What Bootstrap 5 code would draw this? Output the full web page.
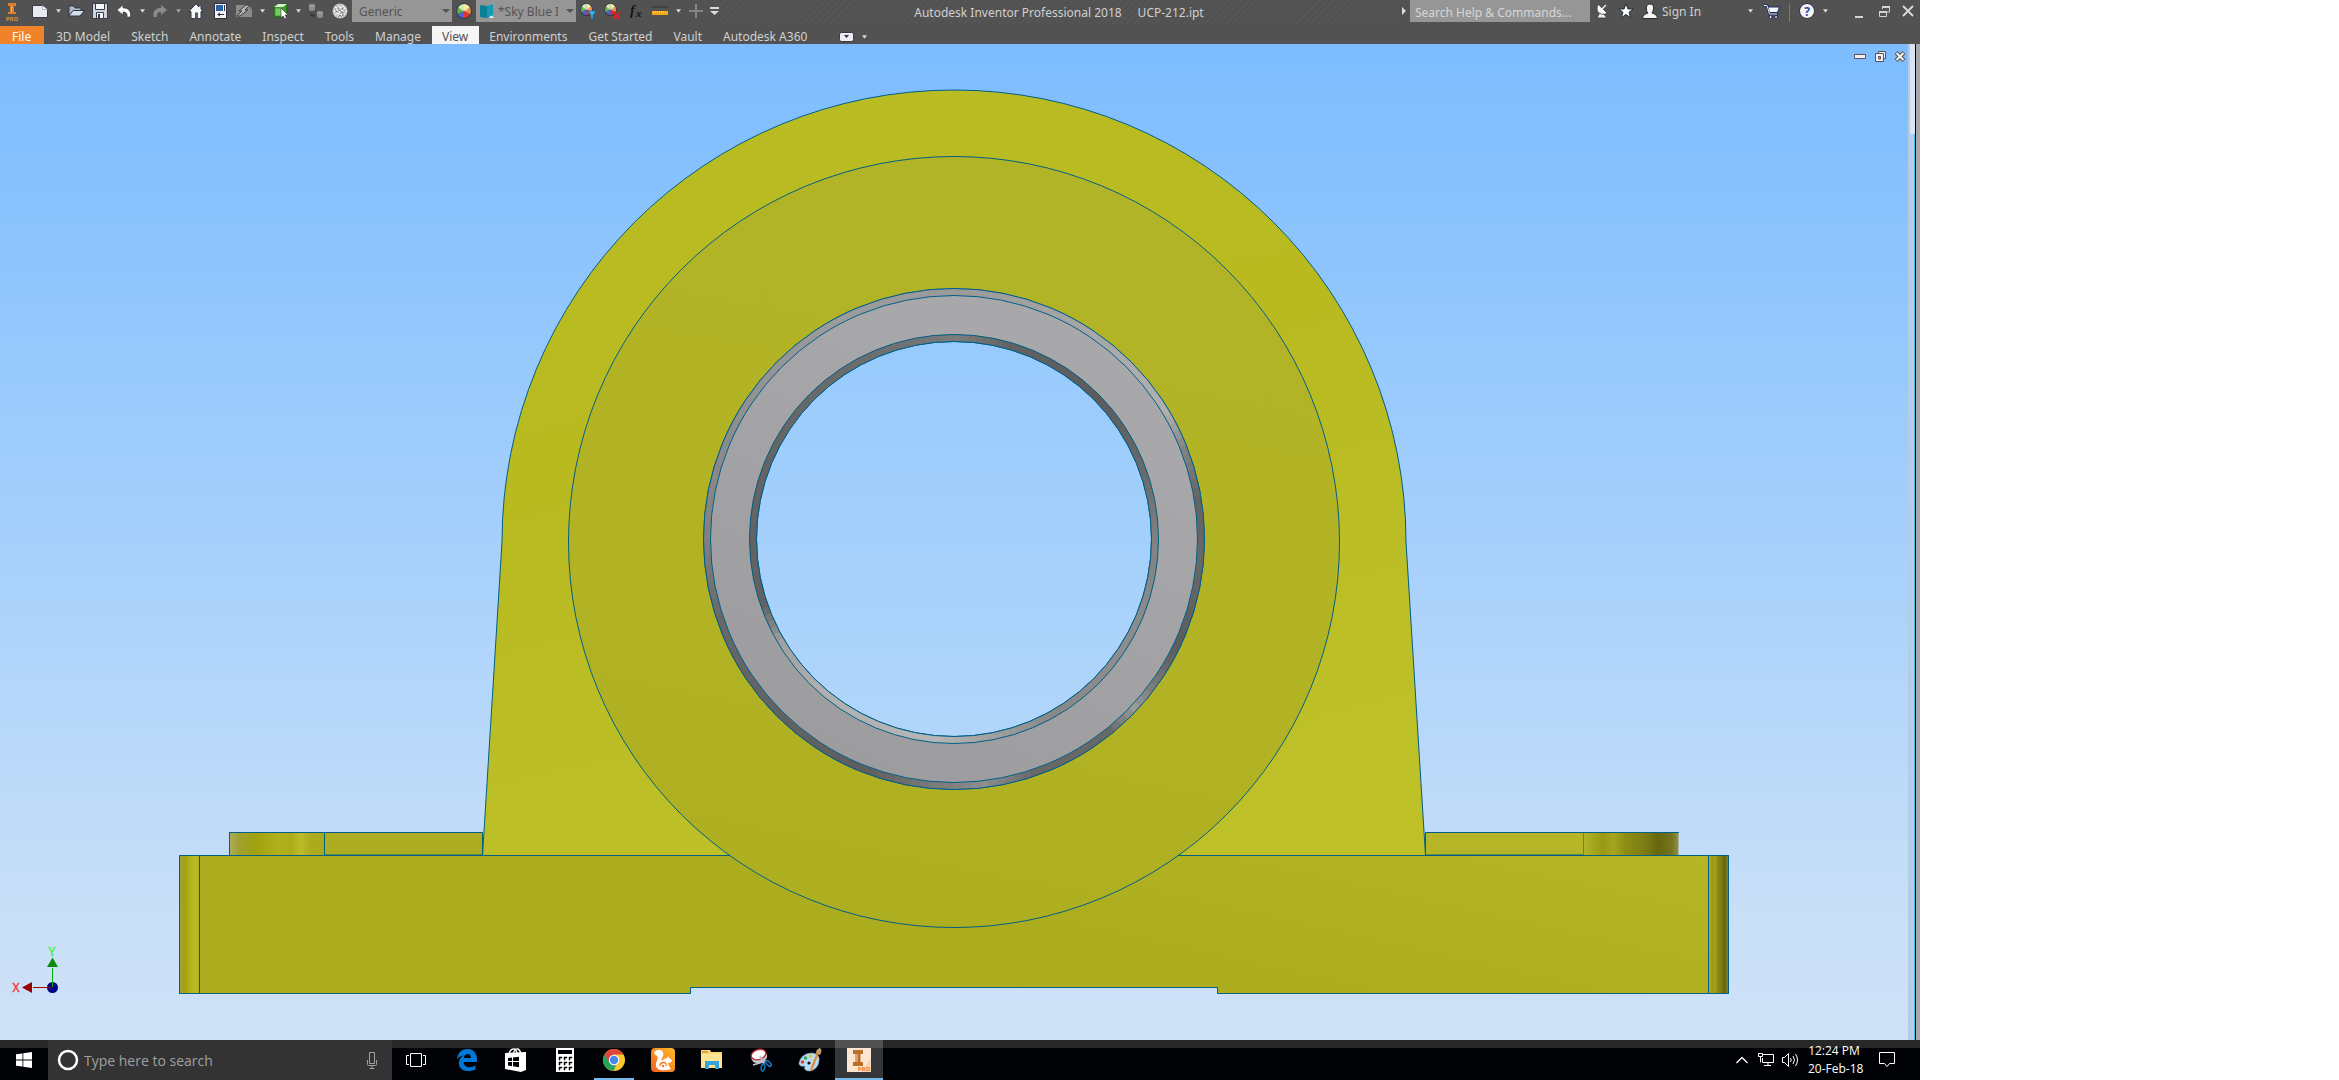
<!DOCTYPE html>
<html lang="en">
<head>
<meta charset="utf-8">
<meta name="viewport" content="width=device-width, initial-scale=1">
<title>Autodesk Inventor Professional 2018 - UCP-212.ipt</title>
<link rel="stylesheet" href="https://cdn.jsdelivr.net/npm/bootstrap@5.3.0/dist/css/bootstrap.min.css">
<style>
body{background:#fff;font-family:"Noto Sans","Open Sans",sans-serif;font-size:12px;line-height:16px}
svg{display:block;flex:none}
.desk{padding-right:419px}
.chrome-bar{background:#525252;color:#d0d0d0;height:44px}
.title-row{height:26px;padding-bottom:4px}
.hatch{background:repeating-linear-gradient(135deg,#525252 0 4px,#575757 4px 5px)}
.caption{padding:5px 0 3px}
.tb{width:24px;height:22px;padding:0;border:0;background:none;display:flex;align-items:center;justify-content:center;flex:none}
.dd{width:12px}
.lead-gap{width:4px}
.end-gap{width:17px}
.pick{width:100px;height:22px;background-color:#969696}
.pick select{appearance:none;border:0;border-radius:0;color:#555;font-size:12px;line-height:16px;padding:4px 18px 2px 7px;background:transparent url("data:image/svg+xml,%3Csvg xmlns='http://www.w3.org/2000/svg' width='8' height='5'%3E%3Cpath d='M0 0h8L4 4z' fill='%23555'/%3E%3C/svg%3E") no-repeat right 2px center;height:22px;min-width:0}
.pick svg + select{padding-left:3px}
.find{width:180px;height:22px;background:#969696;border:0;border-radius:0;color:#d6d6d6;font-size:12px;padding:3px 5px 0}
.find::placeholder{color:#d6d6d6;opacity:1}
.signin{width:82px;color:#d0d0d0}
.vline{width:1px;height:18px;background:#7a7a7a;margin:0 5px}
.tabs{height:18px}
.tabs .nav-link{color:#d0d0d0;font-size:12px;line-height:16px;height:20px;padding:3px 11px 0 10px;white-space:nowrap}
.tabs .file-tab{background:#f0832a;color:#fff;width:44px;padding:3px 12px 0;margin-right:2px}
.tabs .nav-link.active{background:#f5f5f5;color:#525252}
.view{background:linear-gradient(#7cbcff,#a6d0fb 50%,#c8dff8 87%,#cee2f7)}
.view .part{width:100%;height:100%}
.mdi{top:5px;right:-2px}
.mdi button{width:20px;height:15px}
.edge{width:12px;background:#a8a8ac;border-left:6px solid #b6cce6}
.edge-in{width:2px;background:#000;border-left:1px solid #38c0e8}
.thumb{background:#d6e4f4;left:-5px;width:5px;height:90px;top:0}
.task{height:40px;background:linear-gradient(#272727 8px,#010206 8px);font-family:"Open Sans","Noto Sans",sans-serif}
.task .slot{width:49px;height:40px;padding:0;border:0;background:none;display:flex;align-items:center;justify-content:center;flex:none}
.task .start{width:48px}
.task .tview{width:50px;padding-right:2px}
.cortana{width:344px;background:#333;padding:0 12px 0 9px}
.cortana input{background:none;border:0;color:#a0a0a0;font-size:14px;line-height:20px;padding:1px 5px 0;min-width:0}
.cortana input::placeholder{color:#a0a0a0;opacity:1}
.task .run{box-shadow:inset 0 -2px #76b9ed;width:40px;margin:0 4px 0 5px}
.task .now{background:linear-gradient(#525252 8px,#34363a 8px);box-shadow:inset 0 -2px #76b9ed;width:48px;margin-left:1px}
.tray{padding-right:6px}
.tray button{width:24px;height:40px}
.clock{width:52px;line-height:18px;color:#fff;padding-top:2px;margin-left:6px;white-space:nowrap}
.tray .note{width:54px}
</style>
<script src="https://cdn.jsdelivr.net/npm/bootstrap@5.3.0/dist/js/bootstrap.bundle.min.js"></script>
</head>
<body>
<svg width="0" height="0" class="position-absolute" aria-hidden="true">
  <defs>
    <symbol id="car" viewBox="0 0 6 4"><path d="M0 0h6L3 4z" fill="#d8d8d8"/></symbol>
    <symbol id="wheel" viewBox="0 0 16 16">
      <circle cx="8" cy="8" r="7.8" fill="#26304a"/>
      <path d="M8 8V1A7 7 0 0 1 14 4.5z" fill="#f6e27a"/><path d="M8 8V1A7 7 0 0 0 2 4.500z" fill="#bfe08a"/>
      <path d="M8 8 14 4.500A7 7 0 0 1 14 11.500z" fill="#ef8a3a"/><path d="M8 8 2 4.500A7 7 0 0 0 2 11.500z" fill="#5fae3c"/>
      <path d="M8 8 14 11.500A7 7 0 0 1 8 15z" fill="#e03434"/><path d="M8 8 2 11.500A7 7 0 0 0 8 15z" fill="#5560d8"/>
      <ellipse cx="8" cy="5" rx="5" ry="3.500" fill="#fff" opacity=".35"/>
    </symbol>
  </defs>
</svg>
<div class="desk vh-100 d-flex flex-column overflow-hidden">
  <header class="chrome-bar flex-shrink-0 overflow-hidden">
    <div class="title-row d-flex align-items-start">
      <button class="tb" aria-label="Inventor menu"><svg width="18" height="22" viewBox="0 0 18 22"><path d="M5 3h8v3h-2v6h2v2H5v-2h2V6H5z" fill="#d98032"/><path d="M8 6h1v6H8z" fill="#f6b46e"/><text x="9" y="21" text-anchor="middle" font-size="6" font-weight="700" fill="#e08a3a">PRO</text></svg></button>
      <span class="lead-gap flex-shrink-0"></span>
      <button class="tb" aria-label="New"><svg width="16" height="14" viewBox="0 0 16 14"><path d="M.5 1.500h10l5 4v8H.5z" fill="#e8eaf0" stroke="#333a48"/><path d="M10.500 1.500v4h5z" fill="#fff" stroke="#8a90a0" stroke-width=".6"/></svg></button>
      <button class="tb dd" aria-label="New options"><svg width="5" height="4"><use href="#car"/></svg></button>
      <button class="tb" aria-label="Open"><svg width="17" height="12" viewBox="0 0 17 12"><path d="M1 11V1h5l1 2h6v3" fill="#b0bccc" stroke="#2e3848"/><path d="M1 11 5 5.500h11.500L12 11z" fill="#d5dfec" stroke="#2e3848"/></svg></button>
      <button class="tb" aria-label="Save"><svg width="16" height="16" viewBox="0 0 16 16"><path d="M.5 .5h15v15H.5z" fill="#cfd3dc" stroke="#343c4c"/><path d="M3.500 .5h9v6h-9z" fill="#f4f6fa" stroke="#343c4c"/><path d="M4.500 9.500h7v6h-7z" fill="#fff" stroke="#343c4c"/><path d="M6 11h2v4H6z" fill="#343c4c"/></svg></button>
      <button class="tb" aria-label="Undo"><svg width="16" height="14" viewBox="0 0 16 14"><path d="M1 6 7 1v3c5 0 8 2 7.500 9H11c.5-3-.5-5-4-5v3z" fill="#fff" stroke="#333" stroke-width=".6"/></svg></button>
      <button class="tb dd" aria-label="Undo list"><svg width="5" height="4"><use href="#car"/></svg></button>
      <button class="tb" aria-label="Redo"><svg width="16" height="14" viewBox="0 0 16 14"><path d="M15 6 9 1v3C4 4 1 6 1.500 13H5c-.5-3 .5-5 4-5v3z" fill="#8a8a8a"/></svg></button>
      <button class="tb dd" aria-label="Redo list"><svg width="5" height="4" opacity=".6"><use href="#car"/></svg></button>
      <button class="tb" aria-label="Home"><svg width="16" height="16" viewBox="0 0 16 16"><path d="M8 .8 .8 8.500H3v7h10v-7h2.200L13 6V2h-2v2z" fill="#f4f6fa" stroke="#2e3848"/><path d="M7 9.500h3v6H7z" fill="#4a566c"/></svg></button>
      <button class="tb" aria-label="Drawing"><svg width="13" height="16" viewBox="0 0 13 16"><path d="M.5 .5h12v15H.5z" fill="#f4f4f4" stroke="#2a3040"/><path d="M2 2h7v6H2z" fill="#2a62a8"/><path d="M10 2h1v6h-1zM4 11h6v1H4z" fill="#334"/><path d="M6 9.500v4L3 11.500z" fill="#334"/></svg></button>
      <button class="tb" aria-label="Update"><svg width="16" height="14" viewBox="0 0 16 14"><path d="M0 1h13l3 5v7H0z" fill="#8b8b8b"/><path d="M1 12 6 7H3l7-6 4 0-5 5h3l-8 6z" fill="#b4b4b4" stroke="#3c3c3c"/></svg></button>
      <button class="tb dd" aria-label="Update options"><svg width="5" height="4"><use href="#car"/></svg></button>
      <button class="tb" aria-label="Select"><svg width="15" height="17" viewBox="0 0 15 17"><path d="M1 4 5 1h9v9l-4 4H1z" fill="#3d9a2c" stroke="#1d5e12"/><path d="M1 4h9l4-3H5z" fill="#d9f0c8"/><path d="M2.500 5.500h6v7h-6z" fill="#7cc866"/><path d="M8 5v10l2-2 2 3 1.500-1-1.500-3h3z" fill="#fff" stroke="#333" stroke-width=".6"/></svg></button>
      <button class="tb dd" aria-label="Select options"><svg width="5" height="4"><use href="#car"/></svg></button>
      <button class="tb" aria-label="Move bodies"><svg width="16" height="16" viewBox="0 0 16 16"><path d="M1 2q3-2.500 6 0v5q-3 2-6 0zM9 9q3-2.500 6 0v5q-3 2-6 0z" fill="#8c8c8c"/><path d="M1 2.500q3 2 6 0M9 9.500q3 2 6 0" stroke="#aaa" fill="none"/><path d="M3 10v2.500h3M5 10.500l2 2-2 2" stroke="#2e2e2e" fill="none"/></svg></button>
      <button class="tb" aria-label="Material"><svg width="16" height="16" viewBox="0 0 16 16"><circle cx="8" cy="8" r="7.500" fill="#c8c8c8"/><path d="M3 4l2 1 1-2 3 2 2-2 2 3M2 8l3-1 2 2 3-2 2 2 3-1M3 12l3-2 2 3 3-3 2 2" stroke="#fff" fill="none"/><path d="M3 6l2 3 3-2 2 3 3-2M6 14l2-2 2 2M5 3l2 3M11 4l-1 3M11 10v3" stroke="#6e6e6e" stroke-width=".8" fill="none"/></svg></button>
      <div class="pick d-flex align-items-center flex-shrink-0"><select class="w-100" aria-label="Material"><option>Generic</option></select></div>
      <button class="tb" aria-label="Appearance browser"><svg width="16" height="16"><use href="#wheel"/></svg></button>
      <div class="pick d-flex align-items-center flex-shrink-0 ps-1"><svg width="15" height="15" viewBox="0 0 15 15"><path d="M0 1 7 2v12l-7-1z" fill="#0d7f96"/><path d="M7 2 13 0v12l-6 2z" fill="#159cb4"/><path d="M9 14q2-5 5 0z" fill="#dbeaf0"/></svg><select class="w-100" aria-label="Appearance"><option>*Sky Blue I</option></select></div>
      <button class="tb" aria-label="Adjust appearance"><svg width="17" height="17" viewBox="0 0 17 17"><use href="#wheel" width="13" height="13"/><path d="M8 8h8l-3 4v4h-2v-4z" fill="#3cb4f0" stroke="#0b63a8" stroke-width=".6"/></svg></button>
      <button class="tb" aria-label="Clear appearance"><svg width="17" height="17" viewBox="0 0 17 17"><use href="#wheel" width="13" height="13"/><path d="m9 9 7 7m0-7-7 7" stroke="#e02020" stroke-width="2"/></svg></button>
      <button class="tb" aria-label="Parameters"><svg width="22" height="22" viewBox="0 0 22 22"><text x="5" y="15" font-family="Liberation Serif" font-style="italic" font-weight="700" font-size="15" fill="#161616">f</text><text x="11" y="17" font-family="Liberation Serif" font-style="italic" font-weight="700" font-size="11" fill="#161616">x</text></svg></button>
      <button class="tb" aria-label="Measure"><svg width="16" height="10" viewBox="0 0 16 10"><path d="M0 1h16" stroke="#2d3644"/><path d="M0 5h16v4H0z" fill="#f0a818"/><path d="M1 6h14" stroke="#fff0a0" stroke-dasharray="1 1"/></svg></button>
      <button class="tb dd" aria-label="Measure options"><svg width="5" height="4"><use href="#car"/></svg></button>
      <button class="tb" aria-label="Add"><svg width="14" height="14"><path d="M6 0h2v6h6v2H8v6H6V8H0V6h6z" fill="#858585"/></svg></button>
      <button class="tb dd" aria-label="Customize"><svg width="9" height="8"><path d="M0 0h9v2H0zM0 4h9L4.500 8z" fill="#dcdcdc"/></svg></button>
      <div class="hatch flex-grow-1 text-center align-self-start"><span class="caption d-block text-nowrap">Autodesk Inventor Professional 2018<span class="ms-3">UCP-212.ipt</span></span></div>
      <button class="tb dd" aria-label="Collapse search"><svg width="4" height="8"><path d="M0 0l4 4-4 4z" fill="#dcdcdc"/></svg></button>
      <input class="find flex-shrink-0" type="text" aria-label="Search" placeholder="Search Help &amp; Commands...">
      <button class="tb" aria-label="Communication"><svg width="14" height="16" viewBox="0 0 14 16"><path d="M5 9 2 15h10l-4-5z" fill="#e8e8e8" stroke="#222a38" stroke-width=".7"/><path d="M3 1Q0 9 6 11q4 1 6-1z" fill="#f8f8f8" stroke="#222a38" stroke-width=".7"/><path d="m7 6 4-4" stroke="#eee" stroke-width="1.500"/></svg></button>
      <button class="tb" aria-label="Favorites"><svg width="16" height="16" viewBox="0 0 16 16"><path d="m8 .8 2 5.200h5.300L11 9.300l1.700 5.500L8 11.500l-4.700 3.300L5 9.300.7 6H6z" fill="#fff" stroke="#222a38"/></svg></button>
      <button class="tb" aria-label="Account"><svg width="16" height="17" viewBox="0 0 16 17"><path d="M8 1c3 0 4 2 3.500 5-.5 2-1 3-1.500 4 3 1 5 2 5.500 5.500h-15C1 12 3 11 6 10 5 9 4.500 8 4.500 6 4 3 5 1 8 1z" fill="#f4f4f4" stroke="#222a38"/></svg></button>
      <a class="signin text-decoration-none flex-shrink-0 text-nowrap" href="#"><span class="d-block pt-1">Sign In</span></a>
      <button class="tb dd me-1" aria-label="Sign in options"><svg width="5" height="4"><use href="#car"/></svg></button>
      <button class="tb" aria-label="App store"><svg width="16" height="15" viewBox="0 0 16 15"><path d="M0 1.500h3l2.500 8.500H14" fill="none" stroke="#1c2860" stroke-width="2.600"/><path d="M4 3h11.500l-2 5.500h-8z" fill="#f4f6fc" stroke="#1c2860"/><path d="M0 1.500h3l2.500 8.500H13" fill="none" stroke="#eef0fa"/><circle cx="6.500" cy="13" r="1.500" fill="#e8ecfa" stroke="#1c2860"/><circle cx="12" cy="13" r="1.500" fill="#e8ecfa" stroke="#1c2860"/></svg></button>
      <span class="vline flex-shrink-0 mt-1"></span>
      <button class="tb" aria-label="Help"><svg width="16" height="16" viewBox="0 0 16 16"><circle cx="8" cy="8" r="7.500" fill="#f4f4f6" stroke="#2a3244"/><text x="8" y="12.500" text-anchor="middle" font-size="12" font-weight="700" fill="#1c4ca8">?</text></svg></button>
      <button class="tb dd" aria-label="Help options"><svg width="5" height="4"><use href="#car"/></svg></button>
      <span class="end-gap flex-shrink-0"></span>
      <button class="tb" aria-label="Minimize"><svg width="12" height="14"><path d="M1 12h8v2H1z" fill="#d4d4d4"/></svg></button>
      <button class="tb" aria-label="Restore"><svg width="13" height="13"><path d="M4.500 4V2h7v5H9" fill="none" stroke="#d4d4d4" stroke-width="1"/><path d="M4 1h8v2H4zM1 6h8v2H1z" fill="#d4d4d4"/><path d="M1.500 7v4.500h7V7" fill="none" stroke="#d4d4d4"/></svg></button>
      <button class="tb" aria-label="Close"><svg width="12" height="12"><path d="m1 1 10 10M11 1 1 11" stroke="#dcdcdc" stroke-width="1.800"/></svg></button>
    </div>
    <nav class="tabs nav flex-nowrap" aria-label="Ribbon">
      <a class="nav-link file-tab" href="#">File</a>
      <a class="nav-link" href="#">3D Model</a><a class="nav-link" href="#">Sketch</a><a class="nav-link" href="#">Annotate</a><a class="nav-link" href="#">Inspect</a><a class="nav-link" href="#">Tools</a><a class="nav-link" href="#">Manage</a><a class="nav-link active" aria-current="page" href="#">View</a><a class="nav-link" href="#">Environments</a><a class="nav-link" href="#">Get Started</a><a class="nav-link" href="#">Vault</a><a class="nav-link" href="#">Autodesk A360</a>
      <button class="tb ms-3" aria-label="Ribbon display"><svg width="15" height="10"><rect x=".5" y=".5" width="14" height="9" rx="2" fill="#eceef4" stroke="#333a48"/><path d="M5 3h5L7.500 6z" fill="#333"/></svg></button>
      <button class="tb dd" aria-label="Ribbon options"><svg width="5" height="4"><use href="#car"/></svg></button>
    </nav>
  </header>

  <main class="d-flex flex-grow-1 overflow-hidden">
    <div class="view flex-grow-1 position-relative overflow-hidden">
      <svg class="part position-absolute top-0 start-0" viewBox="0 44 1908 996" role="img" aria-label="Pillow block bearing housing, front view">
        <defs>
          <linearGradient id="face" x1="0" y1="0" x2=".3" y2="1"><stop offset="0" stop-color="#b9bc22"/><stop offset=".5" stop-color="#b8ba20"/><stop offset="1" stop-color="#bdc027"/></linearGradient>
          <linearGradient id="boss" x1=".3" y1="0" x2=".1" y2="1"><stop offset="0" stop-color="#b2b427"/><stop offset=".6" stop-color="#b1b324"/><stop offset="1" stop-color="#acad1f"/></linearGradient>
          <linearGradient id="foot" x1="0" y1=".4" x2="1" y2="0"><stop offset="0" stop-color="#acac1e"/><stop offset=".4" stop-color="#acad1e"/><stop offset="1" stop-color="#b4b626"/></linearGradient>
          <linearGradient id="ring" x1=".7" y1=".2" x2=".3" y2="1"><stop offset="0" stop-color="#a8a8aa"/><stop offset="1" stop-color="#9c9c9e"/></linearGradient>
          <linearGradient id="endL"><stop offset="0" stop-color="#a0a040"/><stop offset=".25" stop-color="#a2a210"/><stop offset=".5" stop-color="#b0b01c"/><stop offset=".8" stop-color="#bcbc2a"/><stop offset="1" stop-color="#adad1f"/></linearGradient>
          <linearGradient id="endR"><stop offset="0" stop-color="#b2b428"/><stop offset=".2" stop-color="#989814"/><stop offset=".32" stop-color="#a4a420"/><stop offset=".45" stop-color="#8c8c14"/><stop offset=".65" stop-color="#7c7c14"/><stop offset=".78" stop-color="#66660e"/><stop offset=".93" stop-color="#75751e"/><stop offset="1" stop-color="#90904a"/></linearGradient>
          <linearGradient id="padL"><stop offset="0" stop-color="#acac60"/><stop offset=".1" stop-color="#a0a030"/><stop offset=".25" stop-color="#a0a010"/><stop offset=".5" stop-color="#b0b01c"/><stop offset=".65" stop-color="#adad1c"/><stop offset=".75" stop-color="#bcbc2a"/><stop offset=".85" stop-color="#acac1e"/><stop offset="1" stop-color="#a9aa1e"/></linearGradient>
          <linearGradient id="hole" x1="0" x2="0" y1="0" y2="1"><stop offset="0" stop-color="#97cafd"/><stop offset="1" stop-color="#b2d6fa"/></linearGradient>
        </defs>
        <g stroke="#005f86" stroke-width="1" stroke-linejoin="round">
          <path d="M229.500 855v-22.500H324.500V855z" fill="url(#padL)" stroke="none"/>
          <path d="M324.500 832.500h158V855h-158z" fill="#acad20"/>
          <path d="M229 832.500h96M229.500 832v23"/>
          <path d="M1425.500 832.500h158V855h-158z" fill="#b4b628"/>
          <path d="M1583.500 832.500h95V855h-95z" fill="url(#endR)" stroke="none"/>
          <path d="M1583 832.500h96"/>
          <path d="M482.500 855.500 L502 542A452 452 0 0 1 1406 542L1425.500 855.500z" fill="url(#face)"/>
          <path d="M482.500 833v22M1425.500 833v22"/>
          <path d="M179.500 855.500H1728.500V993.500H1217.500V987.500H690.500V993.500H179.500z" fill="url(#foot)"/>
          <path d="M179.500 855.500h20v138h-20z" fill="url(#endL)"/>
          <path d="M1708.500 855.500h20v138h-20z" fill="url(#endR)"/>
          <circle cx="954" cy="542" r="385.500" fill="url(#boss)"/>
          <circle cx="954" cy="539" r="250.500" fill="url(#ring)"/>
          <circle cx="954" cy="539" r="197.500" fill="url(#hole)"/>
          <g id="chamfers" fill="none" stroke-linejoin="miter"></g>
          <g fill="none"><circle cx="954" cy="539" r="250.500"/><circle cx="954" cy="539" r="243.500"/><circle cx="954" cy="539" r="204.500"/><circle cx="954" cy="539" r="197.500"/></g>
        </g>
        <g>
          <circle cx="52.500" cy="987.500" r="5.500" fill="#00008c"/>
          <path d="M52.500 968v19" stroke="#00b400"/><path d="m52.500 957.500 5.500 9.500H47z" fill="#0a8c0a"/>
          <path d="M33 987.500h19" stroke="#b00000"/><path d="m22 987.500 10-5.500v11z" fill="#960000"/>
          <text x="52" y="956" text-anchor="middle" font-size="12" fill="#3cf050" stroke="#3cf050" stroke-width=".4">Y</text>
          <text x="16" y="992" text-anchor="middle" font-size="12" fill="#ff3040" stroke="#ff3040" stroke-width=".4">X</text>
        </g>
      </svg>
      <div class="mdi position-absolute d-flex">
        <button class="tb" aria-label="Minimize document"><svg width="12" height="5"><path d="M.5 .5h11v4H.5z" fill="#f2f2f2" stroke="#5c5050"/></svg></button>
        <button class="tb" aria-label="Restore document"><svg width="11" height="11"><path d="M3.500 .5h7v7h-7z" fill="#f2f2f2" stroke="#5c5050"/><path d="M.5 2.500h8v8h-8z" fill="#f2f2f2" stroke="#5c5050"/><path d="M3.500 5.500h2v2.500h-2z" fill="#8cb0d8" stroke="#5c5050"/></svg></button>
        <button class="tb" aria-label="Close document"><svg width="12" height="11"><path d="m2 1.500 8 8m0-8-8 8" stroke="#5c5050" stroke-width="4"/><path d="m2.500 2 7 7m0-7-7 7" stroke="#f4f4f4" stroke-width="2"/></svg></button>
      </div>
    </div>
    <div class="edge flex-shrink-0 d-flex"><div class="edge-in position-relative"><div class="thumb position-absolute"></div></div></div>
  </main>

  <footer class="task d-flex flex-shrink-0">
    <button class="slot start" aria-label="Start"><svg width="16" height="16" viewBox="0 0 16 16"><path d="M0 2.300 6.500 1.400v6.200H0zM7.300 1.300 16 0v7.600H7.300zM0 8.400h6.500v6.200L0 13.700zM7.300 8.400H16V16l-8.700-1.300z" fill="#fff"/></svg></button>
    <div class="cortana d-flex align-items-center flex-shrink-0">
      <svg width="22" height="22"><circle cx="11" cy="11" r="9" fill="none" stroke="#fff" stroke-width="2.500"/></svg>
      <input class="flex-grow-1" type="text" aria-label="Type here to search" placeholder="Type here to search">
      <svg width="16" height="17" viewBox="0 0 16 17" fill="none" stroke="#a0a0a0"><path d="M5.500 .5h5v11h-5zM3.500 8v4.500q0 1 1 1h7q1 0 1-1V8M8 13.500v3M5.500 16.500h5"/></svg>
    </div>
    <button class="slot tview" aria-label="Task view"><svg width="20" height="14" fill="none" stroke="#fff"><path d="M4.500 .5h11v13h-11zM3 2.500H.5v9H3M17 2.500h2.500v9H17"/></svg></button>
    <button class="slot" aria-label="Edge"><svg width="20" height="22" viewBox="0 0 20 22"><path d="M0 10C1 3 5 0 10.500 0 17 0 20 5 20 10v3H6.500c.5 6 7 6.500 12 3.500v4C9 24.500 1 20.500 2 13 2.500 9.500 4.500 7.500 7 6.500 4 7 1.500 8 0 10zm6.800-1H14c0-5.500-6.500-5-7.200 0z" fill="#0078d7"/></svg></button>
    <button class="slot" aria-label="Store"><svg width="22" height="24" viewBox="0 0 22 24"><path d="m0 5 21-1v18l-5 2-16-3z" fill="#fff"/><path d="M4 6q1-5 5-5 2 0 3 4M8 6q2-6 5-5 2 1 3 5" fill="none" stroke="#fff" stroke-width="1.400"/><path d="m3 10 4-.5V13H3zM8 9.400l6-.6V13H8zM3 14h4v4.200L3 17.600zM8 14h6v5.200l-6-.9z" fill="#010206"/></svg></button>
    <button class="slot" aria-label="Calculator"><svg width="18" height="24"><path d="M0 0h18v24H0z" fill="#fff"/><path d="M2 2h14v4H2z" fill="#010206"/><path d="M3 9h3v1H4v2H3zM8 9h3v1H9v2H8zM13 9h3v1h-2v2h-1zM3 14h3v1H4v2H3zM8 14h3v1H9v2H8zM13 14h3v1h-2v2h-1zM3 19h3v1H4v2H3zM8 19h3v1H9v2H8zM13 19h3v1h-2v2h-1z" fill="#010206" stroke="#010206" stroke-width=".5"/></svg></button>
    <button class="slot run" aria-label="Chrome"><svg width="22" height="22" viewBox="0 0 22 22"><circle cx="11" cy="11" r="11" fill="#fbc72f"/><path d="M1.500 5.500A11 11 0 0 1 20.500 5.500H11L6 14z" fill="#de4437"/><path d="M1.500 5.500 6.500 13.500 13 16 10.500 22A11 11 0 0 1 1.500 5.500z" fill="#27a25c"/><circle cx="11" cy="11" r="5.200" fill="#fff"/><circle cx="11" cy="11" r="4.200" fill="#4a86ee"/></svg></button>
    <button class="slot" aria-label="UC Browser"><svg width="24" height="24" viewBox="0 0 24 24"><defs><linearGradient id="uc" x1="0" y1="1" x2="1" y2="0"><stop offset="0" stop-color="#f4601e"/><stop offset="1" stop-color="#ffbc28"/></linearGradient></defs><rect width="24" height="24" rx="4" fill="url(#uc)"/><path d="M3 4q4-3.500 7.500-1.500Q14 5 11 10q-1 2 0 3 2-3 5-3l1-2 1 2q3 1 3 3-1 2-4 2l1 3 2 3q-5 2-10 1-6-1-5-7 1-2 1.500-4Q7 7 5 7.500 3 7 3 4z" fill="#fff"/><path d="M9 18q0-3.500 3.500-3.500T15 18" fill="none" stroke="#f67a20" stroke-width="1.300"/><circle cx="12" cy="18" r="1.300" fill="#f67a20"/></svg></button>
    <button class="slot" aria-label="File Explorer"><svg width="22" height="20" viewBox="0 0 22 20"><path d="M0 0h9l1 2h11v16H0z" fill="#f8d775"/><path d="M1 1h6v2H1z" fill="#d8a83c"/><path d="M0 4h21v14H0z" fill="#fde494"/><path d="M4 19v-8h14v8h-4v-4H8v4z" fill="#35a5dc"/></svg></button>
    <button class="slot" aria-label="Snipping Tool"><svg width="22" height="24" viewBox="0 0 22 24"><g transform="rotate(-18 9 8)"><ellipse cx="9" cy="9" rx="8" ry="6" fill="#c8ccd0"/><ellipse cx="9" cy="6.500" rx="7.500" ry="5" fill="#fff" stroke="#c02838" stroke-width="1.400"/></g><path d="m3 17 13-4M10 8l4 8" stroke="#b8c4d0" stroke-width="1.800"/><ellipse cx="13" cy="19.500" rx="1.700" ry="3.500" fill="none" stroke="#1878c0" stroke-width="1.500" transform="rotate(12 13 19.500)"/><ellipse cx="18.500" cy="15.500" rx="1.700" ry="3.500" fill="none" stroke="#1878c0" stroke-width="1.500" transform="rotate(-45 18.500 15.500)"/></svg></button>
    <button class="slot" aria-label="Paint"><svg width="24" height="24" viewBox="0 0 24 24"><path d="M1 15Q3 6 13 5q9 0 8 8-1 8-9 10-7 0-5-5-6 1-6-3z" fill="#b9dcf2" stroke="#7aa8c8" stroke-width=".7"/><circle cx="4.500" cy="14" r="1.800" fill="#e03c3c"/><circle cx="7.500" cy="10" r="1.800" fill="#36a64a"/><circle cx="12.500" cy="8" r="1.800" fill="#f0c030"/><circle cx="11" cy="15" r="1.600" fill="#10141c"/><path d="M21 5 14 23l-2-1 7-18z" fill="#e08c38"/><path d="M18 5q0-4 4-5 3 2 0 7z" fill="#c49a6a"/></svg></button>
    <button class="slot now" aria-label="Inventor Professional"><svg width="24" height="24" viewBox="0 0 24 24"><path d="M0 0h24v24H0z" fill="#fbe6d2"/><path d="m14 24 10-14v14z" fill="#f6d4b4"/><path d="M6 2h10v4h-2.500v8H16v4H6v-4h2.500V6H6z" fill="#b8702c"/><path d="M9 6h2v8H9z" fill="#e0a060"/><text x="17" y="23" text-anchor="middle" font-size="6" font-weight="700" fill="#e87c24">PRO</text></svg></button>
    <div class="tray d-flex align-items-center ms-auto">
      <button class="tb" aria-label="Hidden icons"><svg width="12" height="8"><path d="m.5 7 5.500-5.500L11.500 7" fill="none" stroke="#fff" stroke-width="1.300"/></svg></button>
      <button class="tb" aria-label="Network"><svg width="16" height="14" fill="none" stroke="#fff"><path d="M5 1.500h10.500v8h-11V5M10 9.500v3M6 12.500h7M.5 .5h4v3h-4zM2.500 3.500v6"/></svg></button>
      <button class="tb" aria-label="Volume"><svg width="17" height="14" fill="none" stroke="#fff"><path d="M.5 4.500h2l4-4v13l-4-4h-2zM8.500 5q1.500 2 0 4M11 3q3 4 0 8M13.500 1q4 6 0 12"/></svg></button>
      <div class="clock text-center align-self-start">12:24 PM<br>20-Feb-18</div>
      <button class="tb note" aria-label="Notifications"><svg width="17" height="16"><path d="M.5 .5h15v11h-5l-2.500 3-2.500-3h-5z" fill="none" stroke="#fff"/></svg></button>
    </div>
  </footer>
</div>
<script>
// Shades the two chamfered rims: [clockwise degrees from the top, grey level]
const rims = [
  {r: 247, s: [[0,154],[40,170],[58,176],[68,130],[80,100],[95,104],[115,92],[125,120],[132,154],[140,104],[160,104],[172,142],[185,120],[200,94],[230,100],[250,104],[270,130],[300,144],[330,156],[360,154]]},
  {r: 201, s: [[0,124],[15,98],[45,92],[70,106],[90,130],[120,142],[150,136],[168,160],[185,182],[220,176],[238,160],[250,98],[290,100],[330,108],[350,116],[360,124]]}
];
const g = document.getElementById('chamfers');
for (const rim of rims) for (let a = 0; a < 360; a += 2) {
  const i = rim.s.findIndex(p => p[0] > a), [a0, v0] = rim.s[i - 1], [a1, v1] = rim.s[i];
  const v = Math.round(v0 + (v1 - v0) * (a - a0) / (a1 - a0));
  const pt = d => { const t = d * Math.PI / 180; return (954 + rim.r * Math.sin(t)).toFixed(2) + ' ' + (539 - rim.r * Math.cos(t)).toFixed(2); };
  const p = document.createElementNS('http://www.w3.org/2000/svg', 'path');
  p.setAttribute('d', `M${pt(a)}A${rim.r} ${rim.r} 0 0 1 ${pt(a + 2.2)}`);
  p.setAttribute('stroke', `rgb(${v},${v},${v})`);
  p.setAttribute('stroke-width', 7);
  g.appendChild(p);
}
</script>
</body>
</html>
